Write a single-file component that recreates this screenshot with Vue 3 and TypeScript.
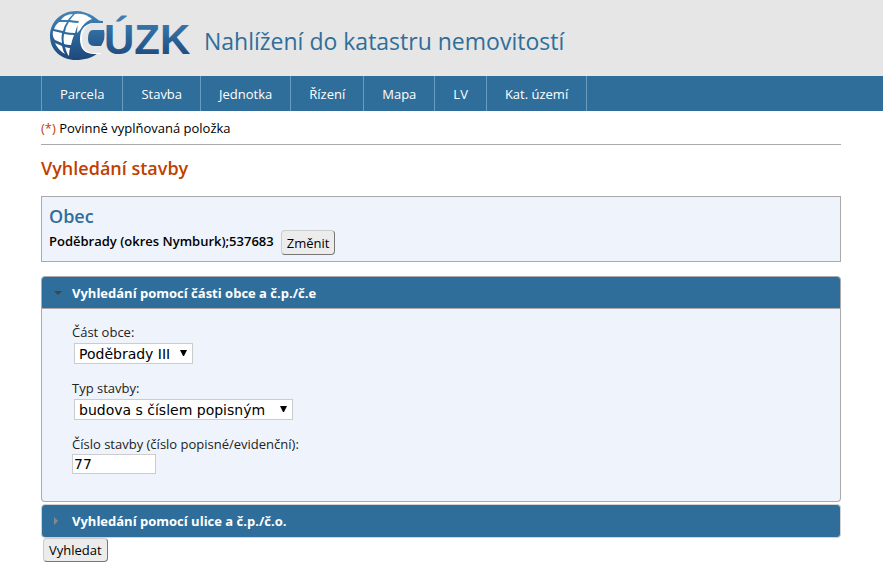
<script setup lang="ts">
import { ref } from 'vue'

interface MenuItem {
  label: string
  href: string
}

const menu: MenuItem[] = [
  { label: 'Parcela', href: '#parcela' },
  { label: 'Stavba', href: '#stavba' },
  { label: 'Jednotka', href: '#jednotka' },
  { label: 'Řízení', href: '#rizeni' },
  { label: 'Mapa', href: '#mapa' },
  { label: 'LV', href: '#lv' },
  { label: 'Kat. území', href: '#uzemi' },
]

const openSection = ref<'cast' | 'ulice'>('cast')
const castObce = ref('Poděbrady III')
const typStavby = ref('budova s číslem popisným')
const cisloStavby = ref('77')
</script>

<template>
  <header class="banner">
    <svg class="logo" width="150" height="65" viewBox="0 -11 150 65" role="img" aria-label="ČÚZK">
      <defs>
        <linearGradient id="logoBlue" gradientUnits="userSpaceOnUse" x1="0" y1="0" x2="0" y2="50">
          <stop offset="0" stop-color="#4585b5" />
          <stop offset="0.4" stop-color="#2f6ea3" />
          <stop offset="1" stop-color="#1d4577" />
        </linearGradient>
      </defs>
      <path d="M51 11L43 5C38 2 32 0 26 0C11 0 0 11 0 25C0 39 11 49 26 49C34 49 42 47 48 42L38 40L31 26L36 15Z" fill="url(#logoBlue)" />
      <g fill="#fff">
        <path d="M15 5Q19 3 23 3Q20 6 18 9L11 9Q12 7 15 5Z" />
        <path d="M25 3Q32 2 38 5Q34 8 30 10Q25 10 20 9Q22 6 25 3Z" />
        <path d="M9 11L17 11Q14 15 13 20L4 18Q5 14 9 11Z" />
        <path d="M19 11Q24 12 29 12Q26 17 25 22Q20 22 15 21Q16 15 19 11Z" />
        <path d="M3 20L12 22Q11 27 12 32L5 29Q2 26 3 20Z" />
        <path d="M14 23Q19 24 24 24Q22 29 21 34Q17 34 14 33Q13 28 14 23Z" />
        <path d="M5 32L12 35Q13 40 15 43Q8 39 5 32Z" />
        <path d="M15 36Q18 37 20 37Q19 41 19 45Q17 43 15 36Z" />
        <path d="M29 9L37 5Q40 6 42 8Q34 11 30 19L27 22Q27 15 29 9Z" />
      </g>
      <path d="M53 12H43C34 13 30 19 30 28C30 38 35 43 44 43H51L54 36V20Z" fill="#fff" />
      <path d="M55 12H44C36 13 32 19 32 28C32 37 36 42 44 42H52L56 34Z" fill="#e6e6e6" />
      <path d="M41 12Q46 9 53 10V12Z" fill="url(#logoBlue)" />
      <path d="M43 19H54Q56 28 51 35H44Q38 35 38 28Q38 19 43 19Z" fill="url(#logoBlue)" />
      <text class="logo-text" x="54" y="43" fill="url(#logoBlue)">ÚZK</text>
    </svg>
    <span class="site-title">Nahlížení do katastru nemovitostí</span>
  </header>

  <nav class="menu">
    <ul>
      <li v-for="item in menu" :key="item.label"><a :href="item.href">{{ item.label }}</a></li>
    </ul>
  </nav>

  <main class="content">
    <p class="required"><span class="mark">(*)</span> Povinně vyplňovaná položka</p>
    <h1>Vyhledání stavby</h1>

    <form @submit.prevent>
      <section class="obec">
        <h2>Obec</h2>
        <div class="obec-row">
          <strong>Poděbrady (okres Nymburk);537683</strong>
          <button type="button" class="btn">Změnit</button>
        </div>
      </section>

      <div class="accordion">
        <button type="button" class="acc-head" :class="{ open: openSection === 'cast' }" :aria-expanded="openSection === 'cast'" @click="openSection = 'cast'">
          <span class="acc-arrow"></span>
          <span>Vyhledání pomocí části obce a č.p./č.e</span>
        </button>
        <div v-show="openSection === 'cast'" class="acc-panel">
          <div class="field">
            <label for="cast">Část obce:</label>
            <span class="select short">
              <select id="cast" v-model="castObce">
                <option>Poděbrady III</option>
              </select>
              <svg width="7" height="7" viewBox="0 0 7 7" aria-hidden="true"><path d="M0 0H7L4 6H3Z" /></svg>
            </span>
          </div>
          <div class="field">
            <label for="typ">Typ stavby:</label>
            <span class="select long">
              <select id="typ" v-model="typStavby">
                <option>budova s číslem popisným</option>
              </select>
              <svg width="7" height="7" viewBox="0 0 7 7" aria-hidden="true"><path d="M0 0H7L4 6H3Z" /></svg>
            </span>
          </div>
          <div class="field">
            <label for="cislo">Číslo stavby (číslo popisné/evidenční):</label>
            <input id="cislo" v-model="cisloStavby" type="text" />
          </div>
        </div>
        <button type="button" class="acc-head" :class="{ open: openSection === 'ulice' }" :aria-expanded="openSection === 'ulice'" @click="openSection = 'ulice'">
          <span class="acc-arrow"></span>
          <span>Vyhledání pomocí ulice a č.p./č.o.</span>
        </button>
      </div>

      <button type="submit" class="btn submit">Vyhledat</button>
    </form>
  </main>
</template>

<style>
body {
  margin: 0;
  background: #fff;
  color: #000;
  font: 13px/20px "Open Sans", "Noto Sans", sans-serif;
}
</style>

<style scoped>
.banner {
  display: flex;
  align-items: flex-start;
  gap: 4px;
  height: 76px;
  box-sizing: border-box;
  padding: 0 42px 0 50px;
  background: #e6e6e6;
}
.logo {
  flex: none;
}
.logo-text {
  font: bold 42px "Liberation Sans", sans-serif;
}
.site-title {
  padding-top: 23px;
  color: #2f6e9a;
  font-size: 23px;
  line-height: 36px;
  white-space: nowrap;
}
.menu {
  padding: 0 42px 0 41px;
  background: #2f6e9a;
}
.menu ul {
  display: flex;
  margin: 0;
  padding: 0;
  list-style: none;
  border-left: 1px solid #6a9cbd;
}
.menu a {
  display: block;
  padding: 0 18px;
  border-right: 1px solid #6a9cbd;
  color: #fff;
  line-height: 36px;
  height: 35px;
  text-decoration: none;
}
.content {
  padding: 0 42px 24px 41px;
}
.required {
  margin: 0;
  padding: 7px 0 6px;
  border-bottom: 1px solid #aaa;
}
.mark {
  color: #c04000;
}
h1 {
  margin: 11px 0 15px;
  color: #c04000;
  font-size: 18px;
  font-weight: 600;
  line-height: 25px;
}
.obec {
  box-sizing: border-box;
  padding: 7px 7px 6px;
  border: 1px solid #aaa;
  background: #eff4fc;
}
h2 {
  margin: 0;
  color: #2f6e9a;
  font-size: 18px;
  font-weight: 600;
  line-height: 24px;
}
.obec-row {
  display: flex;
  align-items: flex-start;
  gap: 7px;
  padding-top: 2px;
}
.obec-row strong {
  font-weight: 600;
  line-height: 22px;
}
.btn {
  height: 25px;
  padding: 0 5px;
  border: 1px solid #ccc;
  border-right-color: #777;
  border-bottom-color: #777;
  border-radius: 4px;
  background: #ececec;
  color: #000;
  font: inherit;
}
.accordion {
  display: flex;
  flex-direction: column;
  margin-top: 14px;
}
.acc-head {
  display: flex;
  align-items: center;
  gap: 8px;
  height: 34px;
  margin-top: 2px;
  padding: 0 12px;
  border: 1px solid #d3d3d3;
  border-radius: 4px;
  background: #2f6e9a;
  color: #fff;
  font: bold 13px/20px "Open Sans", sans-serif;
  text-align: left;
}
.acc-head:first-child {
  margin-top: 0;
}
.acc-head.open {
  height: 33px;
  border-color: #aaa;
  border-radius: 4px 4px 0 0;
}
.acc-arrow {
  box-sizing: border-box;
  width: 10px;
  height: 8px;
  border: 4px solid transparent;
  border-left-color: #888;
  border-right-width: 4px;
  margin: 0;
  background-clip: padding-box;
}
.acc-head.open .acc-arrow {
  width: 8px;
  height: 4px;
  margin-right: 2px;
  border-color: #454545 transparent transparent;
  border-bottom-width: 0;
}
.acc-panel {
  display: flex;
  flex-direction: column;
  gap: 14px;
  padding: 13px 30px 27px;
  border: 1px solid #aaa;
  border-top: 0;
  border-radius: 0 0 4px 4px;
  background: #eff4fc;
  color: #222;
}
.field {
  display: flex;
  flex-direction: column;
  align-items: flex-start;
}
.select {
  position: relative;
  margin: 1px 2px 0;
}
.select select {
  box-sizing: border-box;
  width: 100%;
  height: 21px;
  padding: 0 4px;
  border: 1px solid #ccc;
  border-radius: 0;
  background: #fff;
  color: #000;
  font: 14px/18px "DejaVu Sans", sans-serif;
  appearance: none;
}
.select svg {
  position: absolute;
  top: 7px;
  right: 6px;
  pointer-events: none;
}
.short {
  width: 119px;
}
.long {
  width: 219px;
}
.field input {
  box-sizing: border-box;
  width: 84px;
  height: 20px;
  padding: 0 1px;
  border: 1px solid #ccc;
  background: #fff;
  color: #000;
  font: 14px/18px "DejaVu Sans", sans-serif;
}
.submit {
  display: block;
  height: 24px;
  margin: 0 2px;
}
</style>
